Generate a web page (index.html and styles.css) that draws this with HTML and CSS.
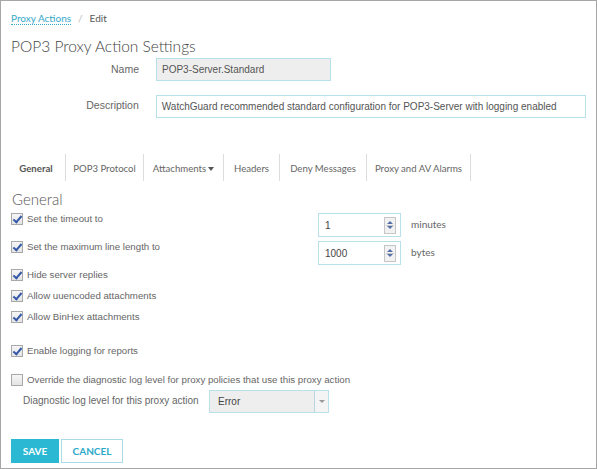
FILE: index.html
```html
<!DOCTYPE html>
<html>
<head>
<meta charset="utf-8">
<link rel="stylesheet" href="styles.css">
</head>
<body>
<div class="frame">
  <div class="crumbs"><a class="crumb-link">Proxy Actions</a><span class="crumb-sep">/</span><span class="crumb-cur">Edit</span></div>
  <h1 class="title">POP3 Proxy Action Settings</h1>

  <div class="field-row name-row">
    <label class="field-label">Name</label>
    <div class="text-input readonly name-input">POP3-Server.Standard</div>
  </div>
  <div class="field-row desc-row">
    <label class="field-label">Description</label>
    <div class="text-input desc-input">WatchGuard recommended standard configuration for POP3-Server with logging enabled</div>
  </div>

  <div class="tabs">
    <div class="tab active t1">General</div>
    <div class="tab t2">POP3 Protocol</div>
    <div class="tab t3">Attachments<span class="caret"></span></div>
    <div class="tab t4">Headers</div>
    <div class="tab t5">Deny Messages</div>
    <div class="tab t6">Proxy and AV Alarms</div>
  </div>

  <h2 class="section">General</h2>

  <div class="opt-row spin-row first">
    <div class="check-label"><span class="cb on"></span>Set the timeout to</div>
    <div class="spinner"><span class="spin-val">1</span><span class="spin-btn"><i class="up"></i><i class="down"></i></span></div>
    <span class="unit">minutes</span>
  </div>
  <div class="opt-row spin-row">
    <div class="check-label"><span class="cb on"></span>Set the maximum line length to</div>
    <div class="spinner"><span class="spin-val">1000</span><span class="spin-btn"><i class="up"></i><i class="down"></i></span></div>
    <span class="unit">bytes</span>
  </div>
  <div class="opt-row simple"><div class="check-label"><span class="cb on"></span>Hide server replies</div></div>
  <div class="opt-row simple"><div class="check-label"><span class="cb on"></span>Allow uuencoded attachments</div></div>
  <div class="opt-row simple"><div class="check-label"><span class="cb on"></span>Allow BinHex attachments</div></div>
  <div class="opt-row simple logging"><div class="check-label"><span class="cb on"></span>Enable logging for reports</div></div>
  <div class="opt-row simple override"><div class="check-label"><span class="cb"></span>Override the diagnostic log level for proxy policies that use this proxy action</div></div>
  <div class="diag-row">
    <span class="diag-label">Diagnostic log level for this proxy action</span>
    <div class="select"><span class="select-val">Error</span><span class="select-btn"><i class="down"></i></span></div>
  </div>

  <div class="buttons">
    <button class="btn save">SAVE</button>
    <button class="btn cancel">CANCEL</button>
  </div>
</div>
</body>
</html>
```

FILE: styles.css
```css
* { box-sizing: border-box; }
html, body { margin: 0; padding: 0; background: #fff; }
body { font-family: "Liberation Sans", Arial, sans-serif; color: #666; }

.frame {
  width: 597px;
  height: 469px;
  border: 1px solid #a6a6a6;
  padding: 0 10px;
  overflow: hidden;
}

.crumbs {
  margin-top: 10px;
  height: 14px;
  font-family: Lato, "Open Sans", sans-serif;
  font-size: 10px;
  line-height: 14px;
  display: flex;
  align-items: center;
}
.crumb-link {
  color: #35a9c9;
  border-bottom: 1px dotted #35a9c9;
  line-height: 12px;
}
.crumb-sep { color: #bbb; margin: 0 7px 0 7px; }
.crumb-cur { color: #555; }

.title {
  margin: 12px 0 0 0;
  font-family: Lato, "Open Sans", sans-serif;
  font-weight: 300;
  font-size: 15.5px;
  line-height: 18px;
  color: #444;
}

.field-row { display: flex; align-items: center; }
.name-row { margin-top: 3px; }
.desc-row { margin-top: 14px; }
.field-label {
  width: 128px;
  text-align: right;
  font-size: 10.5px;
  margin-right: 17px;
  color: #666;
}
.name-row .field-label { margin-top: -2px; }
.desc-row .field-label { margin-top: -4px; }
.text-input {
  height: 23px;
  border: 1px solid #b8e0ea;
  font-size: 10px;
  line-height: 21px;
  padding: 0 5px;
  color: #555;
  white-space: nowrap;
}
.readonly { background: #eee; }
.name-input { width: 175px; }
.desc-input { width: 431px; }

.tabs {
  margin-top: 36px;
  display: flex;
  height: 27px;
}
.tab {
  height: 27px;
  line-height: 29px;
  font-family: Lato, "Open Sans", sans-serif;
  font-size: 9.6px;
  color: #666;
  text-align: center;
  border-right: 1px solid #ddd;
  white-space: nowrap;
}
.tab.active { font-weight: 700; color: #555; }
.t1 { width: 55px; padding-right: 4px; }
.t2 { width: 78px; }
.t3 { width: 80px; }
.t4 { width: 56px; }
.t5 { width: 87px; }
.t6 { width: 104px; }
.caret {
  display: inline-block;
  width: 0; height: 0;
  border-left: 3.5px solid transparent;
  border-right: 3.5px solid transparent;
  border-top: 4px solid #555;
  margin-left: 2px;
  vertical-align: 1px;
}

.section {
  margin: 9px 0 0 1px;
  font-family: Lato, "Open Sans", sans-serif;
  font-weight: 300;
  font-size: 15px;
  line-height: 18px;
  color: #555;
}

.opt-row { display: flex; align-items: flex-start; }
.check-label {
  display: flex;
  align-items: center;
  font-size: 9.7px;
  color: #666;
  height: 12px;
  line-height: 12px;
  white-space: nowrap;
}
.spin-row .check-label { width: 307px; }
.spin-row { height: 28px; }
.spin-row.first { margin-top: 5px; }
.simple { height: 21px; }
.logging { margin-top: 13px; }
.override { margin-top: 8px; }

.cb {
  width: 12px;
  height: 12px;
  border: 1px solid #a8a8a8;
  background: linear-gradient(#f6f6f6, #e4e4e4);
  margin-right: 4px;
  flex: none;
  position: relative;
}
.cb.on::after {
  content: "";
  position: absolute;
  left: 3px;
  top: 0px;
  width: 3px;
  height: 7px;
  border-right: 2px solid #3558a8;
  border-bottom: 2px solid #3558a8;
  transform: rotate(40deg);
}

.spinner {
  width: 83px;
  height: 24px;
  border: 1px solid #b8e0ea;
  display: flex;
  align-items: center;
  justify-content: space-between;
  padding: 0 4px 0 6px;
  font-size: 10px;
  color: #444;
}
.spin-btn {
  width: 12px;
  height: 17px;
  border: 1px solid #c6c6c6;
  background: #f2f2f2;
  display: flex;
  flex-direction: column;
  align-items: center;
  justify-content: space-around;
  padding: 2px 0;
  position: relative;
}
.spin-btn::after {
  content: "";
  position: absolute;
  left: 1px; right: 1px; top: 7px;
  border-top: 1px solid #ccc;
}
.up {
  width: 0; height: 0;
  border-left: 3px solid transparent;
  border-right: 3px solid transparent;
  border-bottom: 3px solid #5570a8;
}
.down {
  width: 0; height: 0;
  border-left: 3px solid transparent;
  border-right: 3px solid transparent;
  border-top: 3px solid #5570a8;
}
.unit {
  margin-left: 10px;
  margin-top: 5px;
  font-family: Lato, "Open Sans", sans-serif;
  font-size: 10px;
  line-height: 12px;
  color: #666;
}

.diag-row { display: flex; align-items: center; margin-top: -5px; padding-left: 12px; }
.diag-label { font-size: 10px; color: #666; width: 186px; margin-top: -3px; }
.select {
  width: 120px;
  height: 23px;
  border: 1px solid #b8e0ea;
  background: #eee;
  display: flex;
  align-items: center;
  justify-content: space-between;
  font-size: 10px;
  color: #444;
}
.select-val { padding-left: 8px; }
.select-btn {
  width: 14px;
  height: 21px;
  border-left: 1px solid #b8d8e0;
  background: #f4f4f4;
  display: flex;
  align-items: center;
  justify-content: center;
}
.select-btn .down { border-top-color: #999; }

.buttons { display: flex; gap: 2px; margin-top: 26px; }
.btn {
  height: 24px;
  font-family: Lato, "Open Sans", sans-serif;
  font-size: 10px;
  font-weight: 700;
  padding: 0;
  cursor: pointer;
}
.save { width: 48px; background: #2bb8d3; color: #fff; border: 1px solid #2bb8d3; }
.cancel { width: 62px; background: #fff; color: #2ba9c9; border: 1px solid #a9dce8; }
```
